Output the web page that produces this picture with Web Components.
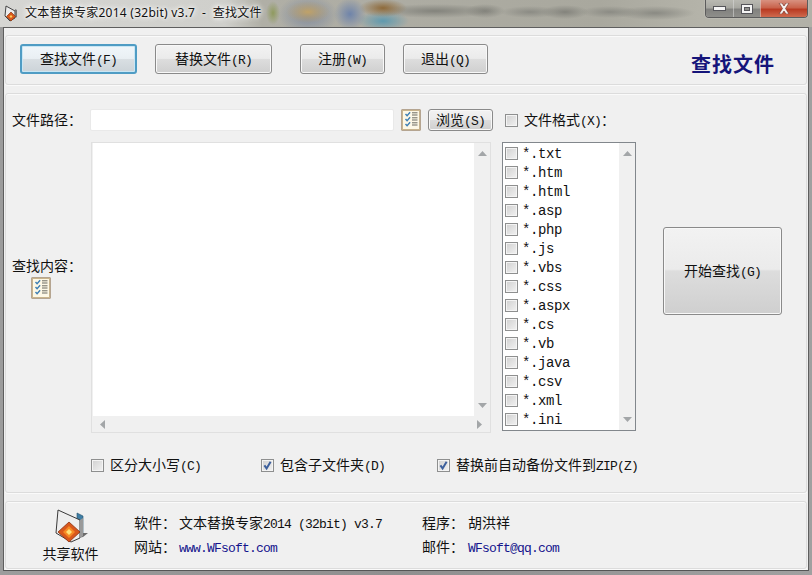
<!DOCTYPE html>
<html lang="zh">
<head>
<meta charset="utf-8">
<title>文本替换专家2014</title>
<style>
  html, body { margin: 0; padding: 0; }
  body { width: 812px; height: 575px; overflow: hidden; font: 14px/20px "Liberation Mono", "Noto Sans CJK SC", monospace; color: #111; }
</style>
</head>
<body>
<app-window></app-window>

<script>
(function () {
  const CJK = '"Noto Sans CJK SC", "Noto Sans", sans-serif';

  // half-width latin run, 7px a char (wide: 8px a char)
  // no whitespace ahead of the slot here: it would show up inside the running text
  class LatText extends HTMLElement {
    constructor() {
      super();
      this.attachShadow({ mode: 'open' }).innerHTML = `<style>
          :host { font-family: "Liberation Mono", monospace; font-size: 13px; letter-spacing: -.8px; }
          :host([wide]) { font-size: 14px; letter-spacing: -.4px; }
          :host([link]) { color: #14148c; }
        </style><slot></slot>`;
    }
  }

  class WinButton extends HTMLElement {
    constructor() {
      super();
      this.attachShadow({ mode: 'open' }).innerHTML = `
        <style>
          :host {
            display: flex; align-items: center; justify-content: center; box-sizing: border-box; flex: none;
            width: var(--w, 85px); height: var(--h, 30px);
            border: 1px solid #8a8a8a; border-radius: 3px;
            background: linear-gradient(#f2f2f2 0, #ebebeb 48%, #dddddd 50%, #cfcfcf 100%);
            box-shadow: inset 0 0 0 1px #f8f8f8;
            font-family: ${CJK}; font-size: 14px; line-height: 20px; color: #111; white-space: nowrap;
          }
          :host([focused]) {
            border: 2px solid #4f9cc4; box-shadow: inset 0 0 0 1px #c9e6f4;
            background: linear-gradient(#f0f6fa 0, #e9eff3 48%, #d9dfe3 50%, #ccd3d8 100%);
          }
        </style><span><slot></slot></span>`;
    }
  }

  class CheckBox extends HTMLElement {
    constructor() {
      super();
      this.attachShadow({ mode: 'open' }).innerHTML = `
        <style>
          :host { display: inline-flex; align-items: center; gap: var(--gap, 6px); font-family: ${CJK}; font-size: 14px; line-height: 19px; white-space: nowrap; }
          .box {
            box-sizing: border-box; width: 13px; height: 13px; flex: none;
            border: 1px solid #8e8f8f; background: linear-gradient(135deg, #d0d0d0, #f2f2f2);
            box-shadow: inset 0 0 0 1px #f4f4f4;
          }
          svg { display: none; width: 11px; height: 11px; }
          :host([checked]) svg { display: block; }
        </style>
        <div class="box" part="box"><svg viewBox="0 0 11 11"><path d="M2.4 5.4 4.6 8.4 8.6 1.8" fill="none" stroke="#3c5f9c" stroke-width="2"/></svg></div>
        <span><slot></slot></span>`;
    }
  }

  class NoteIcon extends HTMLElement {
    constructor() {
      super();
      const rows = [5, 10, 15].map(y => `
        <path d="M4.5 ${y}l1.6 1.8 3-3.6" fill="none" stroke="#3e7fb4" stroke-width="1.4"/>
        <path d="M11 ${y - 1.2}h5.5M11 ${y + 1}h5.5" stroke="#6b6b62" stroke-width="1"/>`).join('');
      this.attachShadow({ mode: 'open' }).innerHTML = `
        <style>:host { display: block; width: 20px; height: 22px; flex: none; } svg { display: block; }</style>
        <svg width="20" height="22" viewBox="0 0 20 22">
          <rect x=".5" y=".5" width="19" height="21" fill="#7b5b33"/>
          <rect x="1.5" y="1.5" width="17" height="19" fill="#fdf8e6" stroke="#c9b48c"/>
          ${rows}
        </svg>`;
    }
  }

  // scrollbar track with its two little arrows
  class ScrollTrack extends HTMLElement {
    constructor() {
      super();
      this.attachShadow({ mode: 'open' }).innerHTML = `
        <style>
          :host { display: flex; flex-direction: column; justify-content: space-between; align-items: center; box-sizing: border-box; width: 16px; padding: 8px 0; background: #f0f0f0; flex: none; }
          :host([horizontal]) { flex-direction: row; width: auto; height: 16px; padding: 0 8px; }
          svg { display: block; }
        </style>
        <svg width="9" height="5" viewBox="0 0 9 5" id="a"><path d="M4.5 0 9 5H0Z" fill="#a3a6a8"/></svg>
        <svg width="9" height="5" viewBox="0 0 9 5" id="b"><path d="M0 0H9L4.5 5Z" fill="#a3a6a8"/></svg>`;
    }
    connectedCallback() {
      if (this.hasAttribute('horizontal')) {
        const a = this.shadowRoot.getElementById('a'), b = this.shadowRoot.getElementById('b');
        a.setAttribute('width', 5); a.setAttribute('height', 9); a.setAttribute('viewBox', '0 0 5 9');
        b.setAttribute('width', 5); b.setAttribute('height', 9); b.setAttribute('viewBox', '0 0 5 9');
        a.innerHTML = '<path d="M0 4.5 5 0V9Z" fill="#a3a6a8"/>';
        b.innerHTML = '<path d="M5 4.5 0 0V9Z" fill="#a3a6a8"/>';
      }
    }
  }

  class TitleBar extends HTMLElement {
    constructor() {
      super();
      this.attachShadow({ mode: 'open' }).innerHTML = `
        <style>
          :host {
            display: flex; height: 27px; flex: none; box-sizing: border-box; padding-right: 4px;
            background:
              radial-gradient(7px 12px at 273px 13px, #8f9a5e 0, transparent 100%),
              radial-gradient(22px 11px at 308px 12px, #c0a268 0, transparent 100%),
              radial-gradient(30px 20px at 308px 15px, #7f8a9e 0, transparent 100%),
              radial-gradient(16px 16px at 350px 14px, #6f84aa 0, transparent 100%),
              radial-gradient(24px 9px at 383px 8px, #8e6a3a 0, transparent 100%),
              radial-gradient(26px 10px at 383px 21px, #5f99ae 0, transparent 100%),
              radial-gradient(60px 7px at 435px 11px, #83837c 0, transparent 100%),
              radial-gradient(20px 7px at 485px 11px, #83837c 0, transparent 100%),
              radial-gradient(30px 6px at 530px 12px, #8b8b84 0, transparent 100%),
              radial-gradient(24px 7px at 565px 12px, #83837c 0, transparent 100%),
              radial-gradient(30px 6px at 610px 12px, #8b8b84 0, transparent 100%),
              radial-gradient(40px 7px at 655px 13px, #8a8a83 0, transparent 100%),
              linear-gradient(90deg, #d6d6d3 0, #cfcfcb 225px, #b0afa6 262px, #a9a89e 600px, #b4b3a9 700px, #b2b1a8 100%);
          }
          .ico { margin: 4px 0 0 4px; width: 16px; height: 18px; flex: none; }
          .name {
            margin: 3px 0 0 5px; flex: 1; font: 12px/20px "Noto Sans", ${CJK}; letter-spacing: .25px;
            color: #111; white-space: pre; text-shadow: 0 0 6px #fff, 0 0 6px #fff, 0 0 3px #fff;
          }
          .ctl { display: flex; height: 18px; align-self: flex-start; box-sizing: border-box; border: 1px solid #5c5c5c; border-top: 0; border-radius: 0 0 4px 4px; overflow: hidden; box-shadow: 0 0 1px #fff; }
          .ctl div { display: flex; align-items: center; justify-content: center; height: 17px; box-sizing: border-box; border-left: 1px solid #dcdcdc88; background: linear-gradient(#b9b9b2 0, #a8a8a2 45%, #82827f 55%, #8e8e8a 100%); }
          .min { width: 27px; border-left: 0 !important; }
          .max { width: 27px; }
          .cls { width: 47px; background: linear-gradient(#d89180 0, #c9634c 45%, #b93a22 55%, #cf6a4e 100%) !important; }
        </style>
        <svg class="ico" viewBox="0 0 16 18">
          <path d="M2 2 11 7V14L6 17 1 12Z" fill="#ececec" stroke="#444" stroke-width="1"/>
          <path d="M11 5 13 6V13L11 14Z" fill="#777"/>
          <path d="M7 8 11.500 12.500 7 17 2.500 12.500Z" fill="#d9581c" stroke="#8a3a12" stroke-width=".7"/>
          <path d="M7 11 8.500 12.500 7 14 5.500 12.500Z" fill="#ffd25a"/>
        </svg>
        <div class="name">文本替换专家2014 (32bit) v3.7  -  查找文件</div>
        <div class="ctl">
          <div class="min"><svg width="13" height="5"><rect x=".5" y=".5" width="12" height="4" fill="#f4f4f4" stroke="#55555a"/></svg></div>
          <div class="max"><svg width="12" height="10"><rect x=".5" y=".5" width="11" height="9" fill="#f4f4f4" stroke="#55555a"/><rect x="3.500" y="3.500" width="5" height="3" fill="#8f8f8c" stroke="#55555a"/></svg></div>
          <div class="cls"><svg width="14" height="11" viewBox="0 0 14 11"><path d="M2 0H5L7 3 9 0H12L8.500 5.500 12 11H9L7 8 5 11H2L5.500 5.500Z" fill="#f6f0ee" stroke="#6c2a1e" stroke-width=".6"/></svg></div>
        </div>`;
    }
  }

  // etched box that holds each of the three bands
  class GroupBand extends HTMLElement {
    constructor() {
      super();
      this.attachShadow({ mode: 'open' }).innerHTML = `
        <style>
          :host { display: block; box-sizing: border-box; margin: 0 1px; border: 1px solid #dcdcdc; border-radius: 3px; box-shadow: 0 1px 0 #fafafa, inset 0 1px 0 #fafafa; }
        </style><slot></slot>`;
    }
  }

  class FormatList extends HTMLElement {
    constructor() {
      super();
      const exts = ['txt','htm','html','asp','php','js','vbs','css','aspx','cs','vb','java','csv','xml','ini'];
      this.attachShadow({ mode: 'open' }).innerHTML = `
        <style>
          :host { display: flex; box-sizing: border-box; height: 289px; border: 1px solid #82878c; background: #fff; }
          .items { flex: 1; display: flex; flex-direction: column; padding: 1px 0 0 2px; }
          check-box { height: 19px; flex: none; --gap: 4px; }
          scroll-track { margin-left: auto; }
        </style>
        <div class="items">
          ${exts.map(e => `<check-box><lat-text wide>*.${e}</lat-text></check-box>`).join('')}
        </div>
        <scroll-track></scroll-track>`;
    }
  }

  class ToolBar extends HTMLElement {
    constructor() {
      super();
      this.attachShadow({ mode: 'open' }).innerHTML = `
        <style>
          :host { display: flex; align-items: center; box-sizing: border-box; height: 48px; padding: 0 31px 2px 14px; }
          win-button + win-button { margin-left: 18px; }
          .b1 { --w: 117px; }
          .reg { margin-left: 28px !important; }
          h1 { margin: 10px 0 0 auto; font: 600 20px/26px ${CJK}; letter-spacing: 1px; color: #15157a; }
        </style>
        <win-button class="b1" focused>查找文件<lat-text>(F)</lat-text></win-button>
        <win-button class="b1">替换文件<lat-text>(R)</lat-text></win-button>
        <win-button class="reg">注册<lat-text>(W)</lat-text></win-button>
        <win-button>退出<lat-text>(Q)</lat-text></win-button>
        <h1>查找文件</h1>`;
    }
  }

  class SearchForm extends HTMLElement {
    constructor() {
      super();
      this.attachShadow({ mode: 'open' }).innerHTML = `
        <style>
          :host {
            display: grid; box-sizing: border-box; height: 398px; align-content: start;
            grid-template-columns: 79px 400px 134px 119px; grid-template-rows: 22px 291px auto;
            row-gap: 11px; padding: 15px 0 0 6px;
            font-family: ${CJK}; font-size: 14px; line-height: 20px;
          }
          .lab { white-space: nowrap; }
          .r1l { align-self: center; padding-bottom: 2px; }
          .path { display: flex; align-items: stretch; margin-left: -1px; }
          .path .inp { width: 304px; flex: none; box-sizing: border-box; background: #fff; border: 1px solid #e9e9e9; border-radius: 2px; }
          .path note-icon { margin-left: 7px; }
          .path win-button { --w: 65px; --h: 22px; margin-left: 7px; }
          .fmt { grid-column: 3 / 5; margin-left: 14px; align-self: center; }
          .r2l { display: flex; flex-direction: column; align-self: center; margin-bottom: 22px; }
          .r2l note-icon { margin: 2px 0 0 19px; }
          .text { display: grid; grid-template-columns: 1fr 16px; grid-template-rows: 1fr 16px; box-sizing: border-box; border: 1px solid #e0e0e0; }
          .text .area { background: #fff; margin-left: 1px; }
          .text scroll-track[horizontal] { grid-column: 1 / 3; }
          .list { margin-left: 11px; width: 134px; align-self: start; }
          .go { --w: 119px; --h: 88px; margin: 85px 0 0 38px; align-self: start; }
          .opts { grid-column: 1 / 5; display: flex; padding: 11px 0 0 79px; align-items: center; }
          .opts .o2 { margin-left: 60px; }
          .opts .o3 { margin-left: 52px; }
        </style>
        <div class="lab r1l">文件路径：</div>
        <div class="path">
          <div class="inp"></div>
          <note-icon></note-icon>
          <win-button>浏览<lat-text>(S)</lat-text></win-button>
        </div>
        <check-box class="fmt">文件格式<lat-text>(X)</lat-text>：</check-box>

        <div class="lab r2l">查找内容：<note-icon></note-icon></div>
        <div class="text">
          <div class="area"></div>
          <scroll-track></scroll-track>
          <scroll-track horizontal></scroll-track>
        </div>
        <format-list class="list"></format-list>
        <win-button class="go">开始查找<lat-text>(G)</lat-text></win-button>

        <div class="opts">
          <check-box>区分大小写<lat-text>(C)</lat-text></check-box>
          <check-box class="o2" checked>包含子文件夹<lat-text>(D)</lat-text></check-box>
          <check-box class="o3" checked>替换前自动备份文件到<lat-text>ZIP(Z)</lat-text></check-box>
        </div>`;
    }
  }

  class InfoFooter extends HTMLElement {
    constructor() {
      super();
      this.attachShadow({ mode: 'open' }).innerHTML = `
        <style>
          :host { display: flex; box-sizing: border-box; height: 66px; font-family: ${CJK}; font-size: 14px; line-height: 24px; }
          .logo { display: flex; flex-direction: column; align-items: center; width: 128px; flex: none; box-sizing: border-box; padding: 7px 0 0 1px; }
          .logo svg { display: block; width: 36px; height: 34px; }
          .logo span { line-height: 20px; }
          .info { display: grid; grid-template-columns: 288px auto; grid-template-rows: 24px 24px; padding-top: 8px; align-content: start; white-space: pre; }
          .k { display: inline-block; width: 45px; }
          .k2 { width: 46px; }
        </style>
        <div class="logo">
          <svg viewBox="0 0 36 34">
            <path d="M24 4 30 7V24L24 27Z" fill="#3f7ea5" stroke="#24506c" stroke-width=".6"/>
            <path d="M29 24H35L30 28 25 29Z" fill="#6b6b6b"/>
            <path d="M5 1 27 11V29L18 33 3 24Z" fill="#eeeeee" stroke="#3a3a3a" stroke-width="1"/>
            <path d="M27 11 30 9V27L27 29Z" fill="#9a9a9a"/>
            <path d="M16 13 27 23 16 33 5 23Z" fill="#d9581c" stroke="#8a3010" stroke-width=".8"/>
            <path d="M16 17 22 23 16 29 10 23Z" fill="#f78a24"/>
            <path d="M16 20 19 23 16 26 13 23Z" fill="#ffe27a"/>
          </svg>
          <span>共享软件</span>
        </div>
        <div class="info">
          <div><span class="k">软件：</span>文本替换专家<lat-text>2014 (32bit) v3.7</lat-text></div>
          <div><span class="k k2">程序：</span>胡洪祥</div>
          <div><span class="k">网站：</span><lat-text link>www.WFsoft.com</lat-text></div>
          <div><span class="k k2">邮件：</span><lat-text link>WFsoft@qq.com</lat-text></div>
        </div>`;
    }
  }

  class AppWindow extends HTMLElement {
    constructor() {
      super();
      this.attachShadow({ mode: 'open' }).innerHTML = `
        <style>
          :host {
            display: flex; flex-direction: column; box-sizing: border-box; width: 812px; height: 575px;
            background: linear-gradient(90deg, #9c9c9c, #8f8f8f 400px, #a0a0a0);
            padding-bottom: 4px;
          }
          .client {
            flex: 1; display: flex; flex-direction: column; gap: 8px; box-sizing: border-box;
            margin: 0 3px; padding: 7px 0 0; background: #f0f0f0;
            border: 1px solid #5e5e5e; border-bottom-color: #555;
          }
        </style>
        <title-bar></title-bar>
        <div class="client">
          <group-band><tool-bar></tool-bar></group-band>
          <group-band><search-form></search-form></group-band>
          <group-band><info-footer></info-footer></group-band>
        </div>`;
    }
  }

  customElements.define('lat-text', LatText);
  customElements.define('win-button', WinButton);
  customElements.define('check-box', CheckBox);
  customElements.define('note-icon', NoteIcon);
  customElements.define('scroll-track', ScrollTrack);
  customElements.define('title-bar', TitleBar);
  customElements.define('group-band', GroupBand);
  customElements.define('format-list', FormatList);
  customElements.define('tool-bar', ToolBar);
  customElements.define('search-form', SearchForm);
  customElements.define('info-footer', InfoFooter);
  customElements.define('app-window', AppWindow);
})();
</script>
</body>
</html>
